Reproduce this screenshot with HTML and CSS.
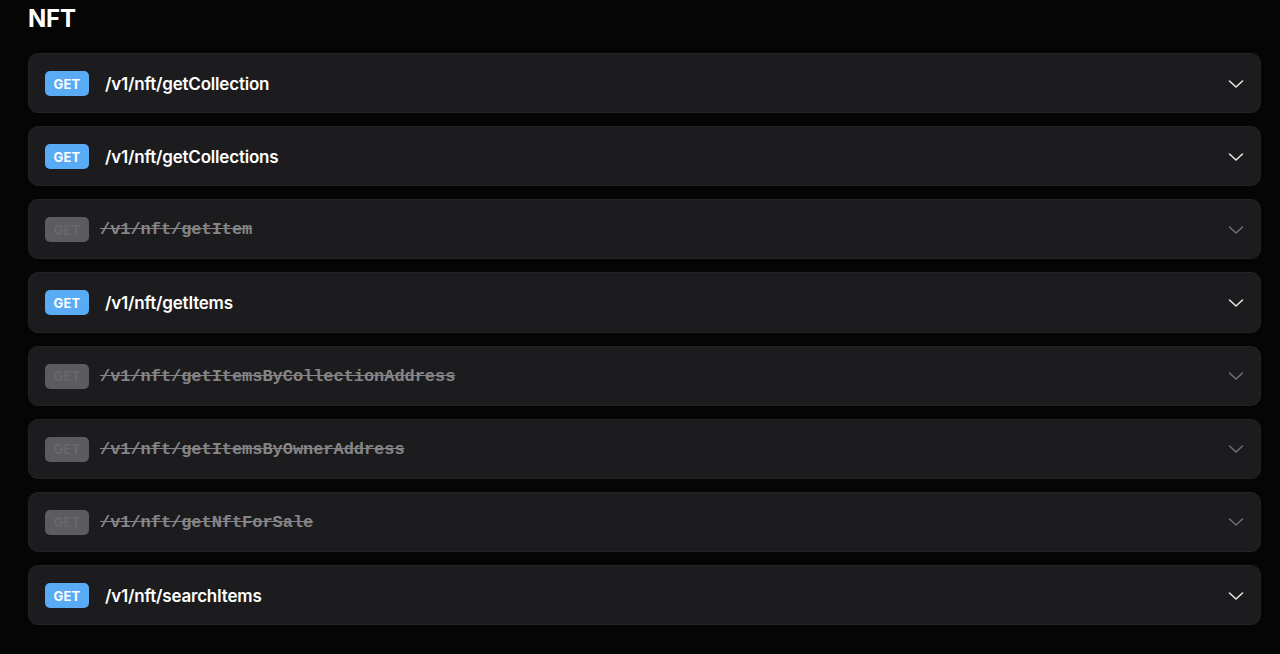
FILE: index.html
```html
<!DOCTYPE html>
<html>

<head>
    <meta charset='utf-8'>
    <title>NFT</title>
    <meta name='viewport' content='width=device-width, initial-scale=1'>
    <link rel="stylesheet" href="styles.css">
</head>

<body>
    <section class="group">
        <h2 class="group-title">NFT</h2>

        <div class="endpoint">
            <span class="method">GET</span>
            <span class="path">/v1/nft/getCollection</span>
            <svg class="chevron" viewBox="0 0 16 10"><path d="M1.5 2 L8 8 L14.5 2" /></svg>
        </div>
        <div class="endpoint">
            <span class="method">GET</span>
            <span class="path">/v1/nft/getCollections</span>
            <svg class="chevron" viewBox="0 0 16 10"><path d="M1.5 2 L8 8 L14.5 2" /></svg>
        </div>
        <div class="endpoint deprecated">
            <span class="method">GET</span>
            <span class="path">/v1/nft/getItem</span>
            <svg class="chevron" viewBox="0 0 16 10"><path d="M1.5 2 L8 8 L14.5 2" /></svg>
        </div>
        <div class="endpoint">
            <span class="method">GET</span>
            <span class="path">/v1/nft/getItems</span>
            <svg class="chevron" viewBox="0 0 16 10"><path d="M1.5 2 L8 8 L14.5 2" /></svg>
        </div>
        <div class="endpoint deprecated">
            <span class="method">GET</span>
            <span class="path">/v1/nft/getItemsByCollectionAddress</span>
            <svg class="chevron" viewBox="0 0 16 10"><path d="M1.5 2 L8 8 L14.5 2" /></svg>
        </div>
        <div class="endpoint deprecated">
            <span class="method">GET</span>
            <span class="path">/v1/nft/getItemsByOwnerAddress</span>
            <svg class="chevron" viewBox="0 0 16 10"><path d="M1.5 2 L8 8 L14.5 2" /></svg>
        </div>
        <div class="endpoint deprecated">
            <span class="method">GET</span>
            <span class="path">/v1/nft/getNftForSale</span>
            <svg class="chevron" viewBox="0 0 16 10"><path d="M1.5 2 L8 8 L14.5 2" /></svg>
        </div>
        <div class="endpoint">
            <span class="method">GET</span>
            <span class="path">/v1/nft/searchItems</span>
            <svg class="chevron" viewBox="0 0 16 10"><path d="M1.5 2 L8 8 L14.5 2" /></svg>
        </div>
    </section>
</body>

</html>
```

FILE: styles.css
```css
body {
    margin: 0;
    background-color: #050505;
    font-family: Inter, "Noto Sans", sans-serif;
    color: #fff;
}

.group {
    padding: 5px 19px 0 28px;
    display: flex;
    flex-direction: column;
    gap: 13px;
}

.group-title {
    margin: 0 0 7px 0;
    font-size: 24px;
    line-height: 28px;
    font-weight: 700;
    letter-spacing: -0.2px;
}

.endpoint {
    height: 60.15px;
    box-sizing: border-box;
    display: flex;
    align-items: center;
    padding: 1px 16px 0 16px;
    background-color: #1c1c1e;
    border: 1px solid #232325;
    border-radius: 10px;
}

.method {
    width: 44px;
    height: 25px;
    display: flex;
    align-items: center;
    justify-content: center;
    border-radius: 5px;
    background-color: #5aabf6;
    color: #fff;
    font-size: 13px;
    font-weight: 700;
    letter-spacing: 0.2px;
}

.path {
    margin-left: 16px;
    font-size: 17px;
    font-weight: 600;
    letter-spacing: -0.2px;
    flex: 1;
}

.chevron {
    width: 16px;
    height: 10px;
    fill: none;
    stroke: #e6e6e6;
    stroke-width: 1.6;
    stroke-linecap: round;
    stroke-linejoin: round;
}

.deprecated .method {
    background-color: #5c5c5e;
    color: #68686a;
}

.deprecated .path {
    margin-left: 11px;
    font-family: "Liberation Mono", "DejaVu Sans Mono", monospace;
    font-weight: 700;
    font-size: 17px;
    letter-spacing: -0.05px;
    color: #858587;
    text-decoration: line-through;
}

.deprecated .chevron {
    stroke: #6e6e70;
}
```
